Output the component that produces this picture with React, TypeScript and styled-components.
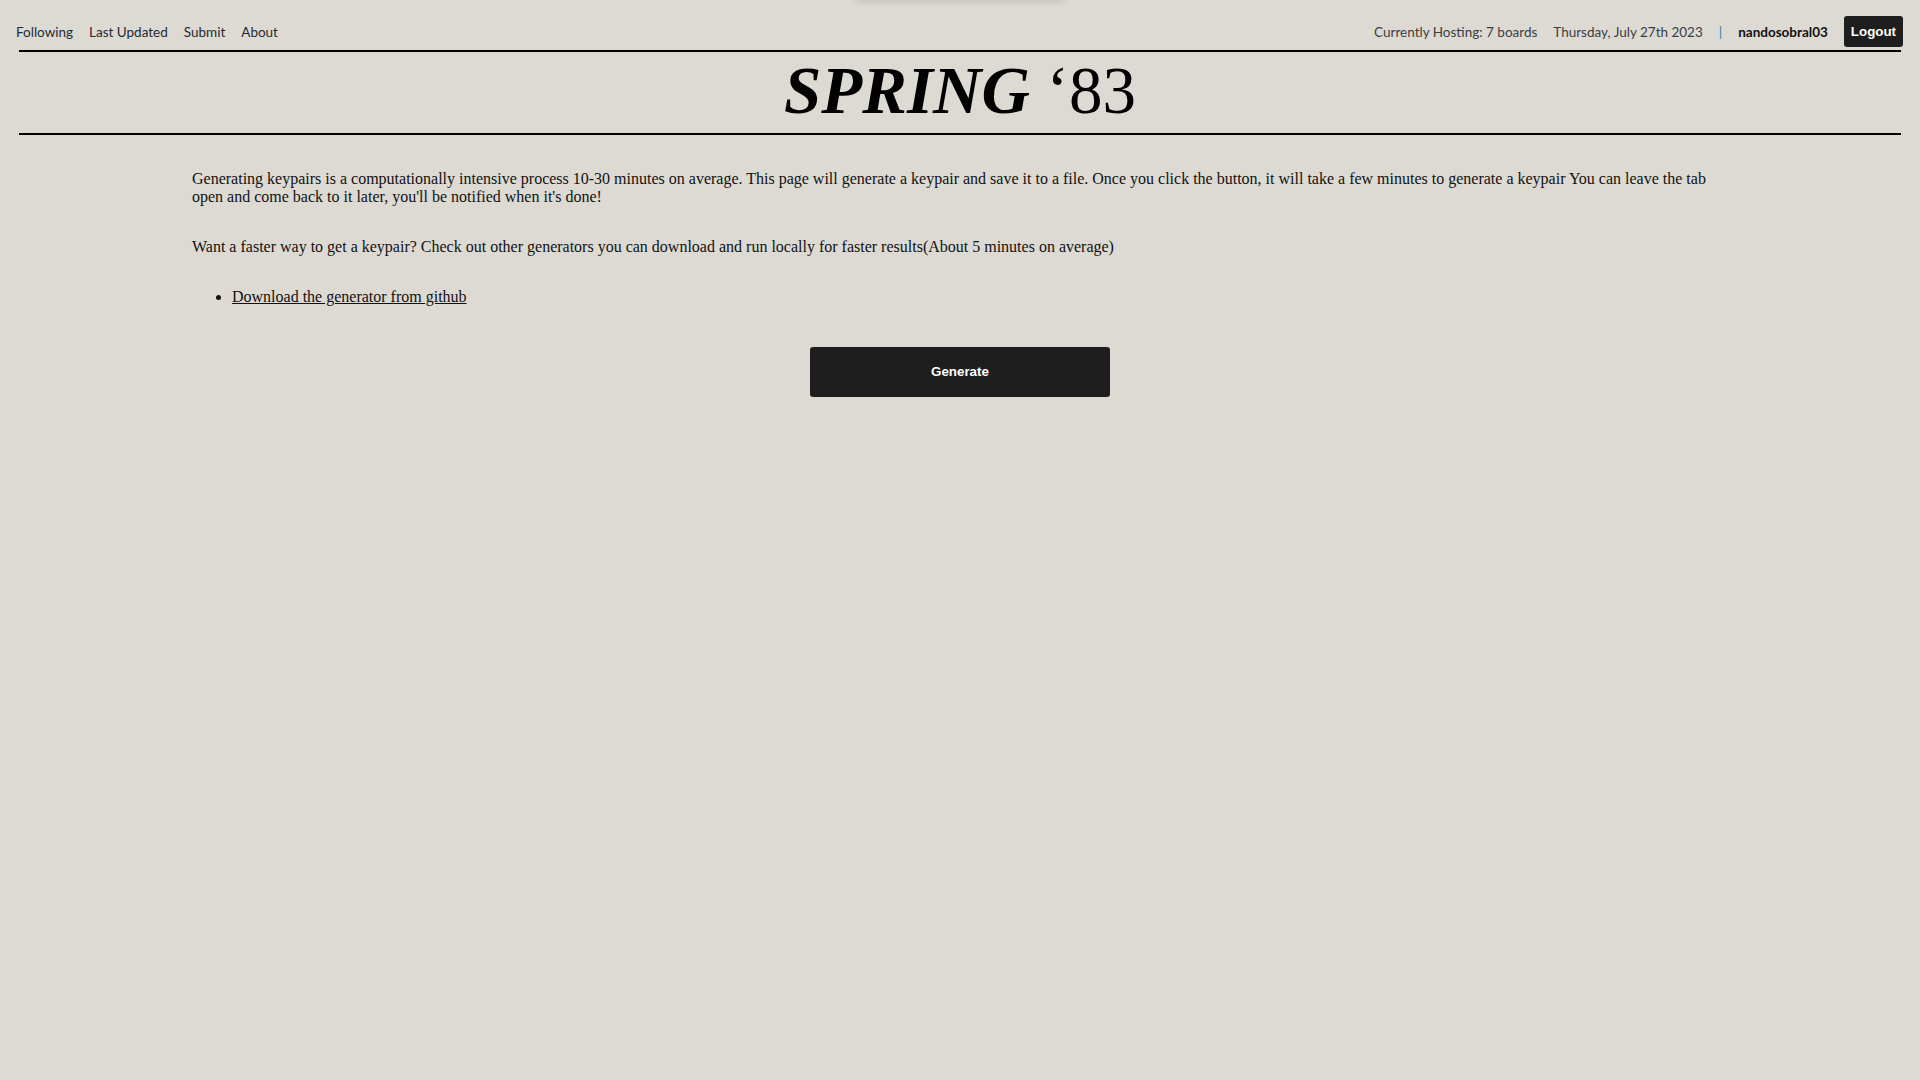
import React from "react";
import styled, { createGlobalStyle } from "styled-components";

const GlobalStyle = createGlobalStyle`
  html, body {
    margin: 0;
    padding: 0;
    background: #dddad3;
  }
  body {
    font-family: "Liberation Serif", "Times New Roman", serif;
    color: #111;
    min-height: 100vh;
  }
`;

const Page = styled.div`
  min-height: 100vh;
  background: #dddad3;
`;

const Toast = styled.div`
  position: fixed;
  top: -46px;
  left: 50%;
  transform: translateX(-50%);
  width: 210px;
  height: 46px;
  border-radius: 6px;
  background: #dddad3;
  box-shadow: 0 2px 6px rgba(0, 0, 0, 0.12);
`;

const Nav = styled.nav`
  display: flex;
  align-items: center;
  justify-content: space-between;
  padding: 16px 17px 3px 16px;
  font-family: Lato, "Open Sans", sans-serif;
  font-size: 13.5px;
`;

const NavGroup = styled.div<{ $gap: number }>`
  display: flex;
  align-items: center;
  gap: ${(p) => p.$gap}px;
`;

const NavLink = styled.a`
  color: #222a33;
  text-decoration: none;
  cursor: pointer;
`;

const Info = styled.span<{ $bold?: boolean; $accent?: boolean }>`
  color: ${(p) => (p.$accent ? "#2f84a8" : p.$bold ? "#111" : "#3a3d42")};
  font-weight: ${(p) => (p.$bold ? 700 : 400)};
`;

const SmallButton = styled.button`
  font-family: "Liberation Sans", Arial, sans-serif;
  font-size: 13.33px;
  font-weight: 700;
  color: #fff;
  background: #1e1e1e;
  border: none;
  border-radius: 3px;
  padding: 8px 7px;
  line-height: 15px;
  cursor: pointer;
`;

const Rule = styled.hr`
  margin: 0 19px;
  border: none;
  height: 2px;
  background: #000;
`;

const Title = styled.h1`
  margin: 0;
  padding: 2px 0 5px;
  text-align: center;
  font-family: "Liberation Serif", "Times New Roman", serif;
  font-size: 67px;
  line-height: 1.1;
  color: #000;
  font-weight: 400;
`;

const TitleWord = styled.span`
  font-weight: 700;
  font-style: italic;
`;

const Main = styled.main`
  width: 80%;
  margin: 0 auto;
  padding-top: 35px;
  display: flex;
  flex-direction: column;
  font-size: 16px;
  line-height: normal;
`;

const Paragraph = styled.p`
  margin: 0 0 32px;
`;

const List = styled.ul`
  margin: 0 0 41px;
  padding-left: 40px;
`;

const Link = styled.a`
  color: #111;
  text-decoration: underline;
`;

const GenerateButton = styled.button`
  align-self: center;
  width: 300px;
  height: 50px;
  font-family: "Liberation Sans", Arial, sans-serif;
  font-size: 13.33px;
  font-weight: 700;
  color: #fff;
  background: #1e1e1e;
  border: none;
  border-radius: 3px;
  cursor: pointer;
`;

export default function App() {
  return (
    <Page>
      <GlobalStyle />
      <Toast />
      <Nav>
        <NavGroup $gap={16}>
          <NavLink>Following</NavLink>
          <NavLink>Last Updated</NavLink>
          <NavLink>Submit</NavLink>
          <NavLink>About</NavLink>
        </NavGroup>
        <NavGroup $gap={16}>
          <Info>Currently Hosting: 7 boards</Info>
          <Info>Thursday, July 27th 2023</Info>
          <Info $accent>|</Info>
          <Info $bold>nandosobral03</Info>
          <SmallButton>Logout</SmallButton>
        </NavGroup>
      </Nav>
      <Rule />
      <Title>
        <TitleWord>SPRING</TitleWord> ‘83
      </Title>
      <Rule />
      <Main>
        <Paragraph>
          Generating keypairs is a computationally intensive process 10-30 minutes on average. This page will
          generate a keypair and save it to a file. Once you click the button, it will take a few minutes to
          generate a keypair You can leave the tab open and come back to it later, you'll be notified when it's
          done!
        </Paragraph>
        <Paragraph>
          Want a faster way to get a keypair? Check out other generators you can download and run locally for
          faster results(About 5 minutes on average)
        </Paragraph>
        <List>
          <li>
            <Link>Download the generator from github</Link>
          </li>
        </List>
        <GenerateButton>Generate</GenerateButton>
      </Main>
    </Page>
  );
}
